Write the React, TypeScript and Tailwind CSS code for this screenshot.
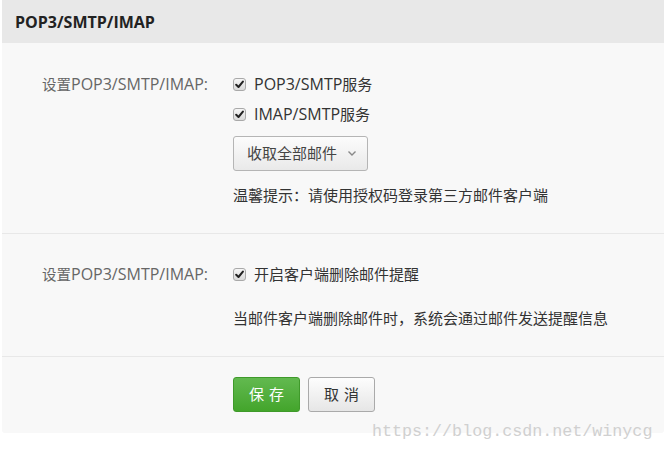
import React from 'react';

const font = '"Open Sans", "Noto Sans CJK SC", sans-serif';

// latin parts of the text render wider in the reference
const L: React.FC<{ children: React.ReactNode; className?: string }> = ({ children, className = '' }) => (
  <span className={`text-[16px] ${className}`}>{children}</span>
);

const Check: React.FC = () => (
  <span className="w-[13px] h-[13px] flex-shrink-0 rounded-[3px] border border-[#a9a9a9] bg-gradient-to-b from-[#f6f6f6] to-[#d9d9d9] flex items-center justify-center">
    <svg width="9" height="9" viewBox="0 0 9 9">
      <path d="M1.2 4.7 L3.5 7 L7.9 1.6" fill="none" stroke="#222" strokeWidth="2" strokeLinecap="round" strokeLinejoin="round" />
    </svg>
  </span>
);

const CheckRow: React.FC<{ children: React.ReactNode }> = ({ children }) => (
  <label className="h-5 flex items-center gap-2 text-[15px] text-[#333]">
    <Check />
    <span>{children}</span>
  </label>
);

const Label: React.FC = () => (
  <div className="w-[206px] text-right text-[14.5px] text-[#666] leading-5 h-5">
    设置<L>POP3/SMTP/IMAP:</L>
  </div>
);

export default function App() {
  return (
    <div className="relative w-[664px] h-[452px] bg-white pl-[2px] overflow-hidden" style={{ fontFamily: font }}>
      <div className="rounded-b-[3px] overflow-hidden">
        {/* Header */}
        <div className="h-[43px] bg-[#e8e8e8] flex items-center pl-[13px]">
          <span className="text-[16px] font-bold text-[#222]">POP3/SMTP/IMAP</span>
        </div>

        {/* Section 1 */}
        <div className="bg-[#f8f8f8] pt-[31px] pb-[28px] border-b border-[#e8e8e8] flex">
          <Label />
          <div className="ml-[25px] flex flex-col">
            <CheckRow>
              <L>POP3/SMTP</L>服务
            </CheckRow>
            <div className="mt-[10px]">
              <CheckRow>
                <L>IMAP/SMTP</L>服务
              </CheckRow>
            </div>
            <button className="mt-[12px] w-[135px] h-[35px] rounded-[3px] border border-[#b5b5b5] bg-gradient-to-b from-[#fcfcfc] to-[#e9e9e9] flex items-center pl-[13px] gap-[10px] text-[15px] text-[#444]">
              <span>收取全部邮件</span>
              <svg width="10" height="7" viewBox="0 0 10 7">
                <path d="M1.5 1.5 L5 5 L8.5 1.5" fill="none" stroke="#888" strokeWidth="1.4" />
              </svg>
            </button>
            <div className="mt-[14px] h-5 leading-5 text-[15px] text-[#333]">温馨提示：请使用授权码登录第三方邮件客户端</div>
          </div>
        </div>

        {/* Section 2 */}
        <div className="bg-[#f8f8f8] pt-[30px] pb-[28px] border-b border-[#e8e8e8] flex">
          <Label />
          <div className="ml-[25px] flex flex-col">
            <CheckRow>开启客户端删除邮件提醒</CheckRow>
            <div className="mt-[24px] h-5 leading-5 text-[15px] text-[#333]">当邮件客户端删除邮件时，系统会通过邮件发送提醒信息</div>
          </div>
        </div>

        {/* Buttons */}
        <div className="bg-[#f8f8f8] pt-[20px] pb-[21px] pl-[231px] flex gap-[8px]">
          <button className="w-[67px] h-[35px] rounded-[3px] border border-[#3f9a2a] bg-gradient-to-b from-[#62b94f] to-[#43a52b] text-white text-[15px] tracking-[5px] pl-[5px]">保存</button>
          <button className="w-[67px] h-[35px] rounded-[3px] border border-[#aaa] bg-gradient-to-b from-[#fdfdfd] to-[#e6e6e6] text-[#333] text-[15px] tracking-[5px] pl-[5px]">取消</button>
        </div>
      </div>

      {/* watermark */}
      <div className="absolute left-[372px] top-[420px] text-[16.7px] text-[#d0d0d0] leading-6" style={{ fontFamily: '"Liberation Mono", monospace' }}>
        https://blog.csdn.net/winycg
      </div>
    </div>
  );
}
